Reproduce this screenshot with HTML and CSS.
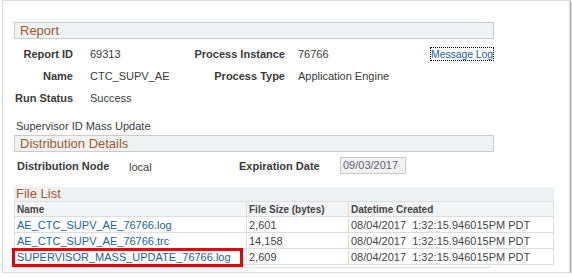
FILE: index.html
```html
<!DOCTYPE html>
<html>
  <head>
    <meta http-equiv="Content-Type" content="text/html;charset=utf-8" />
    <title>Report Detail</title>
    <link rel="stylesheet" href="styles.css">
  </head>

  <body>
    <div class="frame">
      <div class="groupBox">Report</div>

      <div class="reportGrid">
        <label class="lbl">Report ID</label>
        <span class="val">69313</span>
        <label class="lbl">Process Instance</label>
        <span class="val2">76766</span>
        <span class="msgLog"><a href="#">Message Log</a></span>

        <label class="lbl">Name</label>
        <span class="val">CTC_SUPV_AE</span>
        <label class="lbl">Process Type</label>
        <span class="val2">Application Engine</span>
        <span></span>

        <label class="lbl lblLeft">Run Status</label>
        <span class="val">Success</span>
        <span></span>
        <span></span>
        <span></span>
      </div>

      <div class="descr">Supervisor ID Mass Update</div>

      <div class="groupBox distBox">Distribution Details</div>

      <div class="distRow">
        <label class="lbl lblLeft distLbl">Distribution Node</label>
        <span class="val local">local</span>
        <label class="lbl lblLeft">Expiration Date</label>
        <span class="dateField">09/03/2017</span>
      </div>

      <div class="gridTitle">File List</div>
      <table class="fileGrid">
        <tr>
          <th class="colName">Name</th>
          <th class="colSize">File Size (bytes)</th>
          <th>Datetime Created</th>
        </tr>
        <tr>
          <td><a href="#">AE_CTC_SUPV_AE_76766.log</a></td>
          <td>2,601</td>
          <td>08/04/2017&nbsp; 1:32:15.946015PM PDT</td>
        </tr>
        <tr>
          <td><a href="#">AE_CTC_SUPV_AE_76766.trc</a></td>
          <td>14,158</td>
          <td>08/04/2017&nbsp; 1:32:15.946015PM PDT</td>
        </tr>
        <tr>
          <td class="marked"><a href="#">SUPERVISOR_MASS_UPDATE_76766.log</a></td>
          <td>2,609</td>
          <td>08/04/2017&nbsp; 1:32:15.946015PM PDT</td>
        </tr>
      </table>
      <div class="gridFoot"></div>
    </div>
  </body>
</html>
```

FILE: styles.css
```css
body {
  margin: 0;
  font-family: "Liberation Sans", Arial, sans-serif;
  font-size: 11px;
  color: #3a3a3a;
  background: white;
}

a {
  color: #1d5fa6;
  text-decoration: none;
}

.frame {
  box-sizing: border-box;
  margin-left: 2px;
  width: 568px;
  height: 273px;
  padding: 21px 0 0 11px;
  border: 1px solid #dcdcdc;
  box-shadow: 1px 1px 2px rgba(0, 0, 0, 0.45);
}

.groupBox {
  box-sizing: border-box;
  width: 480px;
  height: 17px;
  line-height: 15px;
  padding-left: 5px;
  background: #f0f3f4;
  border: 1px solid #c9cdd1;
  color: #a2592a;
  font-size: 13px;
}

.reportGrid {
  display: grid;
  grid-template-columns: 59px 117px 95px 145px 64px;
  grid-auto-rows: 22px;
  align-items: center;
  margin-top: 4px;
}

.lbl {
  font-weight: bold;
  text-align: right;
  white-space: nowrap;
  color: #3a3a3a;
}

.lblLeft {
  text-align: left;
  padding-left: 1px;
}

.val {
  padding-left: 17px;
  white-space: nowrap;
}

.val2 {
  padding-left: 13px;
  white-space: nowrap;
}

.msgLog {
  justify-self: start;
}

.msgLog a {
  display: block;
  height: 12px;
  line-height: 12px;
  font-size: 10.5px;
  letter-spacing: -0.1px;
  border: 1px dotted #000;
  white-space: nowrap;
}

.descr {
  margin-top: 10px;
  line-height: 14px;
  padding-left: 2px;
}

.distBox {
  margin-top: 2px;
}

.distRow {
  display: grid;
  grid-template-columns: 115px 109px 102px 66px;
  align-items: center;
  height: 17px;
  margin-top: 5px;
}

.distLbl {
  padding-left: 3px;
}

.local {
  padding-left: 0;
  padding-top: 3px;
}

.dateField {
  box-sizing: border-box;
  height: 17px;
  line-height: 15px;
  padding-left: 2px;
  background: #f2f2f2;
  border: 1px solid #c8c8c8;
  color: #5a6270;
}

.gridTitle {
  width: 540px;
  height: 14px;
  line-height: 14px;
  margin-top: 13px;
  padding-left: 2px;
  box-sizing: border-box;
  background: #eef1f3;
  color: #a2592a;
  font-size: 13px;
}

.fileGrid {
  width: 540px;
  border-collapse: collapse;
}

.fileGrid th,
.fileGrid td {
  border: 1px solid #dcdee0;
  padding: 0 2px;
  text-align: left;
  white-space: nowrap;
}

.fileGrid th {
  height: 14px;
  font-size: 10px;
  background: #f4f5f6;
  color: #444;
}

.fileGrid td {
  height: 15px;
  color: #444;
}

.colName {
  width: 227px;
}

.colSize {
  width: 97px;
}

.marked {
  position: relative;
}

.marked::after {
  content: "";
  position: absolute;
  top: -1px;
  bottom: -3px;
  left: -3px;
  right: 3px;
  border: 3px solid #e8000b;
}

.gridFoot {
  width: 477px;
  margin-top: 2px;
  border-top: 1px solid #e2e2e2;
}
```
